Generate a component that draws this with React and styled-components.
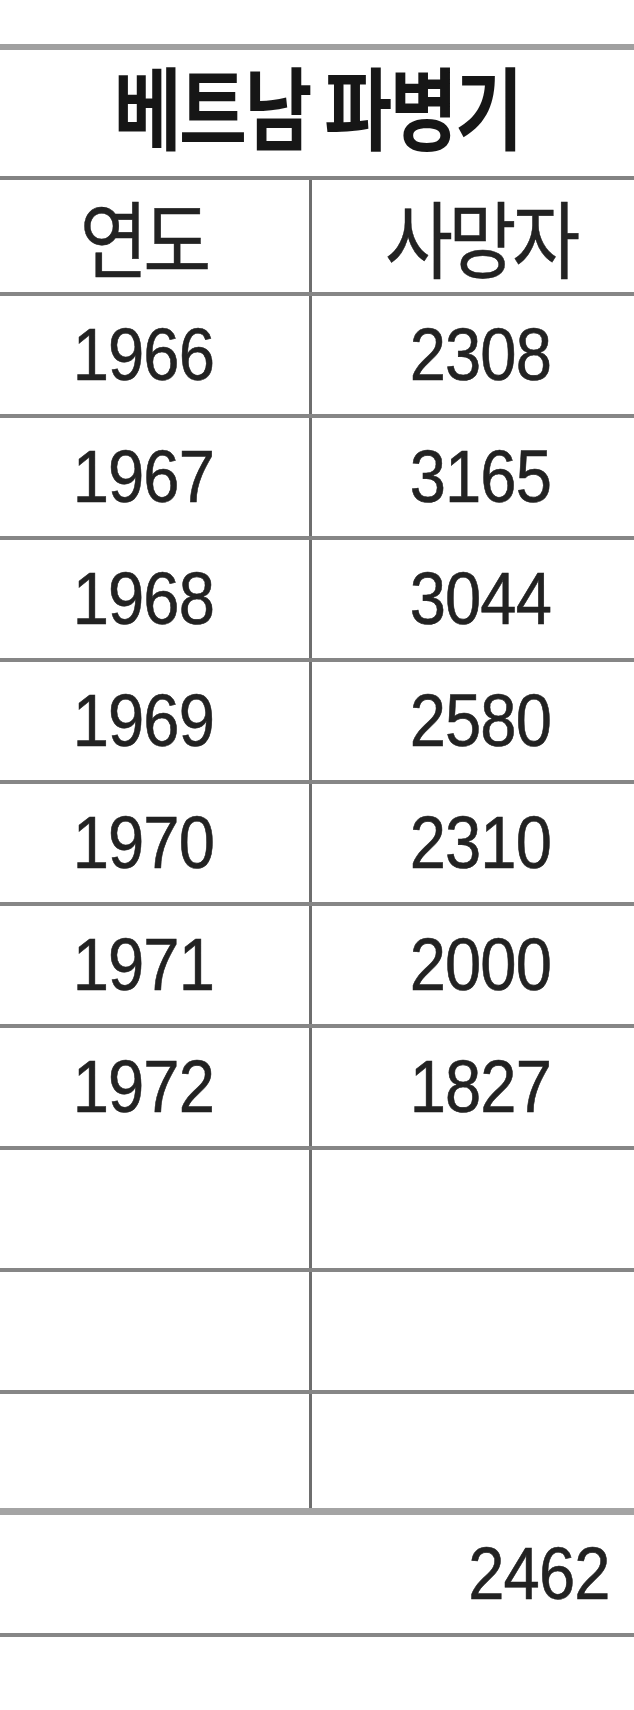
import React from 'react';
import styled, { createGlobalStyle } from 'styled-components';

const GlobalStyle = createGlobalStyle`
  html, body {
    margin: 0;
    background: #fff;
  }
  body {
    overflow-x: hidden;
    font-family: "Liberation Sans", "Noto Sans CJK KR", sans-serif;
  }
`;

const Page = styled.div`
  width: 634px;
  height: 1710px;
  padding-top: 44px;
  box-sizing: border-box;
  background: #fff;
`;

const Table = styled.div`
  display: flex;
  flex-direction: column;
  border-top: 6px solid #a0a0a0;
`;

const TitleRow = styled.div`
  box-sizing: border-box;
  height: 130px;
  padding-bottom: 18px;
  display: flex;
  align-items: center;
  justify-content: center;
  border-bottom: 4px solid #838383;
`;

const Row = styled.div`
  display: grid;
  grid-template-columns: 312px 1fr;
  height: ${p => p.$h || 118}px;
  border-bottom: ${p => (p.$thick ? '7px solid #a4a4a4' : '4px solid #868686')};
`;

const Cell = styled.div`
  display: flex;
  align-items: center;
  justify-content: center;
  padding: ${p => (p.$left ? '0 22px 0 0' : '0 0 0 14px')};
  border-right: ${p => (p.$left ? '3px solid #6e6e6e' : 'none')};
`;

const TotalRow = styled.div`
  height: 118px;
  display: flex;
  align-items: center;
  justify-content: flex-end;
  padding-right: 24px;
  border-bottom: 4px solid #868686;
`;

const Squeeze = styled.span`
  display: inline-block;
  transform: scaleX(${p => p.$x || 0.88});
  transform-origin: ${p => p.$origin || 'center'};
  white-space: nowrap;
`;

const Title = styled(Squeeze)`
  font-family: "Noto Sans CJK KR", sans-serif;
  font-weight: 700;
  font-size: 90px;
  line-height: 1;
  color: #161616;
  letter-spacing: -3px;
`;

const Head = styled(Squeeze)`
  font-family: "Noto Sans CJK KR", sans-serif;
  font-weight: 400;
  font-size: 84px;
  line-height: 1;
  color: #222;
  letter-spacing: -5px;
  -webkit-text-stroke: 0.5px #222;
`;

const Num = styled(Squeeze)`
  font-family: "Liberation Sans", Arial, sans-serif;
  font-size: 74px;
  line-height: 1;
  color: #222;
  letter-spacing: -1px;
  -webkit-text-stroke: 0.6px #222;
`;

const data = [
  ['1966', '2308'],
  ['1967', '3165'],
  ['1968', '3044'],
  ['1969', '2580'],
  ['1970', '2310'],
  ['1971', '2000'],
  ['1972', '1827'],
];

export default function App() {
  return (
    <Page>
      <GlobalStyle />
      <Table>
        <TitleRow>
          <Title $x={0.82}>베트남 파병기</Title>
        </TitleRow>

        <Row $h={112}>
          <Cell $left>
            <Head $x={0.88}>연도</Head>
          </Cell>
          <Cell>
            <Head $x={0.88}>사망자</Head>
          </Cell>
        </Row>

        {data.map(([year, deaths]) => (
          <Row key={year}>
            <Cell $left>
              <Num>{year}</Num>
            </Cell>
            <Cell>
              <Num>{deaths}</Num>
            </Cell>
          </Row>
        ))}

        <Row>
          <Cell $left />
          <Cell />
        </Row>
        <Row>
          <Cell $left />
          <Cell />
        </Row>
        <Row $thick $h={114}>
          <Cell $left />
          <Cell />
        </Row>

        <TotalRow>
          <Num $origin="right">2462</Num>
        </TotalRow>
      </Table>
    </Page>
  );
}
